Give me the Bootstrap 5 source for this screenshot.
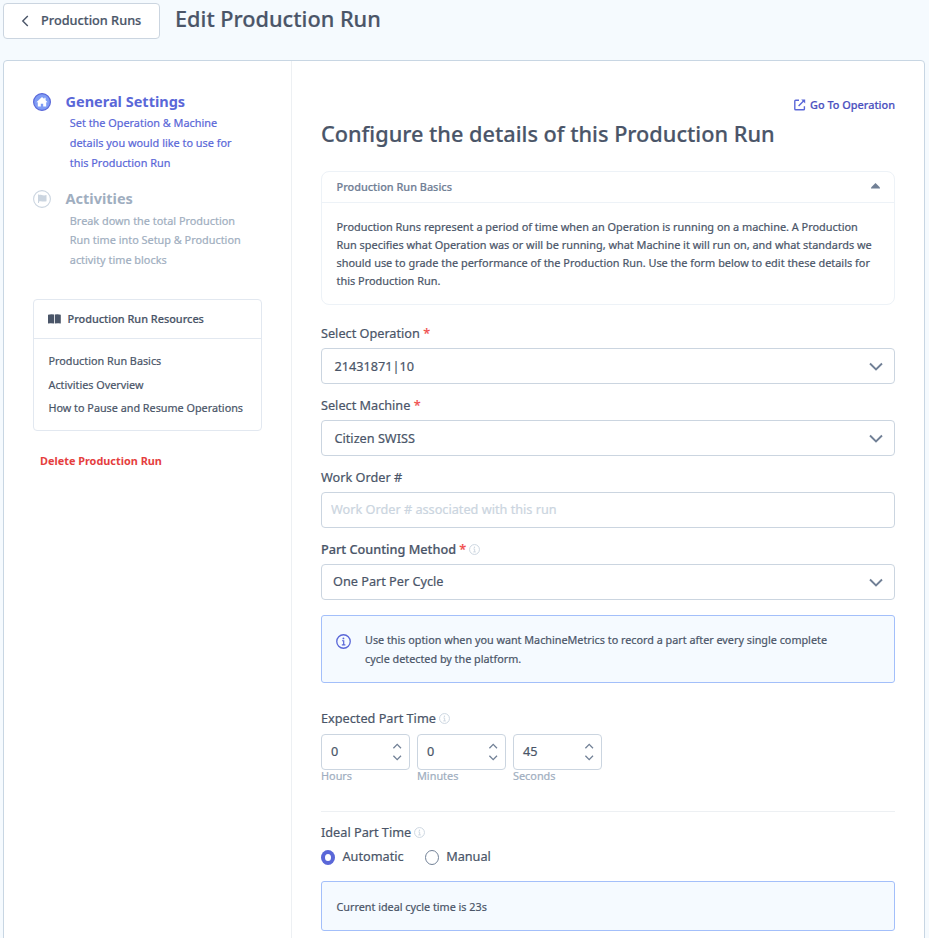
<!DOCTYPE html>
<html lang="en">
<head>
<meta charset="utf-8">
<meta name="viewport" content="width=device-width, initial-scale=1">
<title>Edit Production Run</title>
<link href="https://cdn.jsdelivr.net/npm/bootstrap@5.3.0/dist/css/bootstrap.min.css" rel="stylesheet">
<style>
body{font-family:"Noto Sans",sans-serif;font-size:12.69px;font-weight:400;color:#4a5568;background:#f5fafe;height:938px;overflow:hidden;-webkit-text-stroke:.2px}
svg{display:block;flex:none}
.page-head{height:60px;padding:3px 0 0 3px}
.btn-back{width:157px;height:36px;border:1px solid #cbd5e0;border-radius:4px;background:#fff;color:#4a5568;font-size:12.72px;font-weight:500;padding:0 0 1px 17px}
.back-icon{margin-right:12px}
.page-title{font-size:21.7px;font-weight:500;line-height:32px;margin:0 0 0 15px}
.panel{margin:0 4px 0 3px;height:900px;border:1px solid #c8d6e3;border-radius:4px;background:#fff}
.side{width:288px;border-right:1px solid #edf0f3;padding:31px 29px 0}
.step-title{font-size:14.5px;font-weight:700;line-height:20px;margin:-1px 0 1px;-webkit-text-stroke:0}
.step-icon{margin-right:14.5px}
.step-text{font-size:10.88px;line-height:19.8px;margin:1px 0 0 36.8px;white-space:nowrap}
.active-step{color:#5a67d8}
.idle-step{color:#a0aec0;margin-top:16px}
.idle-step .step-title{margin:0}
.idle-step .step-icon{margin-top:1px}
.idle-step .step-text{line-height:19.4px;margin-top:2.6px}
.res-box{height:132px;border:1px solid #e2e8f0;border-radius:4px;margin-top:29.8px}
.res-head{height:39px;border-bottom:1px solid #e2e8f0;padding:0 0 0 14px;font-size:10.88px;font-weight:500}
.book-icon{margin:-1px 6.5px 0 0}
.res-list{padding:10px 0 0 14.5px;font-size:10.8px;line-height:23.5px}
.res-list a{color:#4a5568}
.del{color:#e53e3e;font-size:10.88px;font-weight:700;line-height:20px;margin:20px 0 0 7px;-webkit-text-stroke:0}
.main{padding:34px 29px 0}
.goto{font-size:10.88px;font-weight:500;line-height:20px;color:#4c51bf}
.main-title{font-size:21.7px;font-weight:500;line-height:32px;margin:3px 0 21px;white-space:nowrap}
.basics{height:134px;border:1px solid #edf2f7;border-radius:8px}
.basics-head{height:31px;border-bottom:1px solid #edf2f7;padding:0 14px 0 14.5px;font-size:10.88px;font-weight:500;color:#718096}
.caret-icon{margin-bottom:3px}
.basics-text{padding:15px 0 0 14.5px;font-size:10.91px;line-height:18px;white-space:nowrap;margin:0}
.lbl{line-height:20px;height:20px;margin:0 0 5px;white-space:pre}
.lbl-first{margin-top:18px}
.lbl-medium{font-weight:500}
.req{color:#f04a4a}
.hint-icon{color:#cbd5e0;margin-left:3px}
.field{height:36px;border:1px solid #cbd5e0;border-radius:4px;background:#fff;padding:1px 11px 0 12.5px;margin-bottom:11px}
.field-plain{padding:0 11px 0 11px}
input.field{display:block;width:100%;padding:0 9px 3px;color:#4a5568;outline:0}
input.field::placeholder{color:#cbd5e0;opacity:1}
.note{border:1px solid #a3bffa;border-radius:3px;background:#f5faff;font-size:10.81px;line-height:19px;white-space:nowrap}
.note-method{height:68px;margin:15px 0 25px;padding:14px 0 0 14px}
.note-method + .lbl{margin-bottom:6px}
.note-icon{color:#5a67d8;margin:4px 14px 0 0}
.note-cycle{height:50px;margin-top:14px;padding-left:14.5px}
.nums{gap:7px}
.num{width:89px;height:36px;border:1px solid #cbd5e0;border-radius:4px;padding:0 7px 0 9px}
.unit{font-size:10.88px;line-height:14px;margin-top:-1px;color:#a0aec0}
.rule{height:1px;background:#edf0f3;margin:28px 0 10px}
.radios{height:20px}
.radio-label{margin-left:7.5px}
.radio-next{margin-left:21px}
</style>
</head>
<body>
<svg width="0" height="0" class="position-absolute">
<defs>
<symbol id="info" viewBox="0 0 16 16"><circle cx="8" cy="8" r="7.200" fill="none" stroke="currentColor" stroke-width="1.400"/><path d="M6.400 7.200H8.200V11.400M6.200 11.500H10" fill="none" stroke="currentColor" stroke-width="1.300"/><circle cx="7.900" cy="4.700" r="1" fill="currentColor"/></symbol>
<symbol id="chev" viewBox="0 0 14 9"><path d="M1 1.500 7 7.500 13 1.500" fill="none" stroke="#718096" stroke-width="1.900"/></symbol>
<symbol id="spin" viewBox="0 0 10 18"><path d="M1.400 5.200 5.200 1.400 9 5.200M1.400 12.800 5.200 16.600 9 12.800" fill="none" stroke="#718096" stroke-width="1.300"/></symbol>
</defs>
</svg>
<header class="page-head d-flex align-items-start">
<button class="btn-back d-flex align-items-center" type="button"><svg class="back-icon" width="8" height="12" viewBox="0 0 8 12"><path d="M6.800 1 1.800 6 6.800 11" fill="none" stroke="#4a5568" stroke-width="1.400"/></svg><span>Production Runs</span></button>
<h1 class="page-title">Edit Production Run</h1>
</header>
<div class="panel d-flex">
<aside class="side flex-shrink-0">
<section class="active-step">
<div class="d-flex align-items-center"><svg class="step-icon" width="18" height="18" viewBox="0 0 18 18"><circle cx="9" cy="9" r="8.400" fill="#7f9cf5" stroke="#5a67d8" stroke-width="1.200"/><path d="M9 4 3.400 9.200H4.800V13.600H7.800V10.800H10.200V13.600H13.200V9.200H14.600L12.600 7.300V4.800H11.300V6.100Z" fill="#fff"/></svg><h2 class="step-title">General Settings</h2></div>
<p class="step-text">Set the Operation &amp; Machine<br>details you would like to use for<br>this Production Run</p>
</section>
<section class="idle-step">
<div class="d-flex align-items-center"><svg class="step-icon" width="18" height="18" viewBox="0 0 18 18"><circle cx="9" cy="9" r="8.400" fill="#fff" stroke="#cbd5e0" stroke-width="1.100"/><path d="M5 4.500H6V13H5ZM6 5C8 4.400 9.500 6 13.500 5.100V11.200C10 12 8.600 10.700 6 11.400Z" fill="#cbd5e0"/></svg><h2 class="step-title">Activities</h2></div>
<p class="step-text">Break down the total Production<br>Run time into Setup &amp; Production<br>activity time blocks</p>
</section>
<div class="res-box">
<div class="res-head d-flex align-items-center"><svg class="book-icon" width="13" height="10" viewBox="0 0 13 10"><path d="M0 .8Q3 0 6 .6V9.500Q3 8.900 0 9.400ZM6.800 .6Q10 0 12.800 .8V9.400Q10 8.900 6.800 9.500Z" fill="#4a5568"/></svg>Production Run Resources</div>
<nav class="res-list d-flex flex-column text-nowrap"><a class="text-decoration-none" href="#">Production Run Basics</a><a class="text-decoration-none" href="#">Activities Overview</a><a class="text-decoration-none" href="#">How to Pause and Resume Operations</a></nav>
</div>
<div class="del">Delete Production Run</div>
</aside>
<main class="main flex-grow-1">
<div class="goto d-flex align-items-center justify-content-end"><svg class="me-1" width="12" height="12" viewBox="0 0 12 12"><path d="M5 1.200H1.700Q.8 1.200.8 2.100V9.900Q.8 10.800 1.700 10.800H9.500Q10.400 10.800 10.400 9.900V7.200M4.600 7 9.800 1.800" fill="none" stroke="#5a67d8" stroke-width="1.400"/><path d="M7.200.4H11.200V4.400Z" fill="#5a67d8"/></svg>Go To Operation</div>
<h2 class="main-title">Configure the details of this Production Run</h2>
<section class="basics">
<div class="basics-head d-flex align-items-center justify-content-between"><span>Production Run Basics</span><svg class="caret-icon" width="9" height="6" viewBox="0 0 9 6"><path d="M4.500 0 9 4.400V5.500H0V4.400Z" fill="#718096"/></svg></div>
<p class="basics-text">Production Runs represent a period of time when an Operation is running on a machine. A Production<br>Run specifies what Operation was or will be running, what Machine it will run on, and what standards we<br>should use to grade the performance of the Production Run. Use the form below to edit these details for<br>this Production Run.</p>
</section>
<form>
<div class="lbl lbl-first">Select Operation <span class="req">*</span></div>
<div class="field d-flex align-items-center justify-content-between"><span>21431871|10</span><svg width="14" height="9"><use href="#chev"/></svg></div>
<div class="lbl">Select Machine <span class="req">*</span></div>
<div class="field d-flex align-items-center justify-content-between"><span>Citizen SWISS</span><svg width="14" height="9"><use href="#chev"/></svg></div>
<label class="lbl d-block" for="wo">Work Order #</label>
<input id="wo" class="field" placeholder="Work Order # associated with this run">
<div class="lbl lbl-medium d-flex align-items-center">Part Counting Method <span class="req">*</span><svg width="11" height="11" class="hint-icon"><use href="#info"/></svg></div>
<div class="field field-plain d-flex align-items-center justify-content-between"><span>One Part Per Cycle</span><svg width="14" height="9"><use href="#chev"/></svg></div>
<div class="note note-method d-flex"><svg width="15" height="15" class="note-icon"><use href="#info"/></svg><span>Use this option when you want MachineMetrics to record a part after every single complete<br>cycle detected by the platform.</span></div>
<div class="lbl d-flex align-items-center">Expected Part Time<svg width="11" height="11" class="hint-icon"><use href="#info"/></svg></div>
<div class="nums d-flex">
<div><div class="num d-flex align-items-center justify-content-between"><span>0</span><svg width="10" height="18"><use href="#spin"/></svg></div><div class="unit">Hours</div></div>
<div><div class="num d-flex align-items-center justify-content-between"><span>0</span><svg width="10" height="18"><use href="#spin"/></svg></div><div class="unit">Minutes</div></div>
<div><div class="num d-flex align-items-center justify-content-between"><span>45</span><svg width="10" height="18"><use href="#spin"/></svg></div><div class="unit">Seconds</div></div>
</div>
<div class="rule"></div>
<div class="lbl d-flex align-items-center">Ideal Part Time<svg width="11" height="11" class="hint-icon"><use href="#info"/></svg></div>
<div class="radios d-flex align-items-center"><svg width="14" height="16" viewBox="0 0 14 16"><ellipse cx="7" cy="8.500" rx="7" ry="7.500" fill="#5a67d8"/><ellipse cx="7" cy="8.500" rx="3" ry="3.500" fill="#fff"/></svg><span class="radio-label">Automatic</span><svg class="radio-next" width="14" height="16" viewBox="0 0 14 16"><ellipse cx="7" cy="8.500" rx="6.500" ry="7" fill="#fff" stroke="#718096"/></svg><span class="radio-label">Manual</span></div>
<div class="note note-cycle d-flex align-items-center">Current ideal cycle time is 23s</div>
</form>
</main>
</div>
<script src="https://cdn.jsdelivr.net/npm/bootstrap@5.3.0/dist/js/bootstrap.bundle.min.js"></script>
</body>
</html>
